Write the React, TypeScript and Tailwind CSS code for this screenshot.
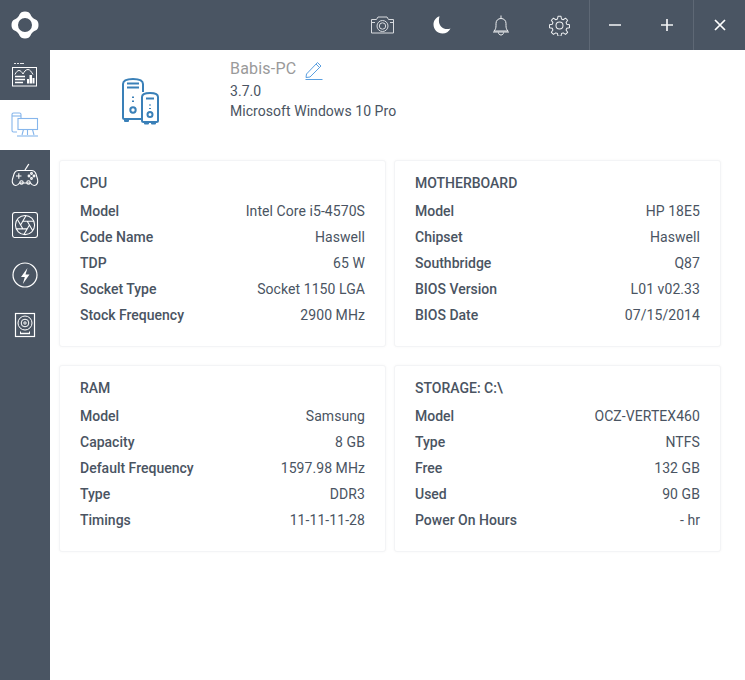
import React from "react";

const W = "#ffffff";

function Logo() {
  return (
    <svg width="30" height="30" viewBox="0 0 30 30" fill="none">
      <path
        fillRule="evenodd"
        fill={W}
        d="M15 1.500C18 1.500 19.500 2.500 20.500 4.500 21 6.500 23.500 9 25.500 9.500 27.500 10.500 28.500 12 28.500 15 28.500 18 27.500 19.500 25.500 20.500 23.500 21 21 23.500 20.500 25.500 19.500 27.500 18 28.500 15 28.500 12 28.500 10.500 27.500 9.500 25.500 9 23.500 6.500 21 4.500 20.500 2.500 19.500 1.500 18 1.500 15 1.500 12 2.500 10.500 4.500 9.500 6.500 9 9 6.500 9.500 4.500 10.500 2.500 12 1.500 15 1.500zM15 8a7 7 0 1 0 0 14 7 7 0 0 0 0-14z"
      />
    </svg>
  );
}

function NavDashboard() {
  return (
    <svg width="28" height="28" viewBox="0 0 28 28" fill="none" stroke={W} strokeWidth="1">
      <path d="M3 2.500h2M6 2.500h2M9 2.500h4" opacity=".85" />
      <rect x="1.500" y="6.500" width="24" height="18.500" />
      <path d="M4 13.500c1.200-2.500 2.500-4 4-4s2.800 1.500 4 3.500c1.200-2 2.500-4.500 5-4.500 2 0 3.500 2.500 5 5" />
      <path d="M4 15.500h10M4 18.500h10M4 21.500h8" strokeWidth="1.300" />
      <rect x="16" y="18" width="2" height="4.500" fill={W} stroke="none" />
      <rect x="18.500" y="14" width="2.500" height="8.500" fill={W} stroke="none" />
      <rect x="21.500" y="17" width="2" height="5.500" fill={W} stroke="none" />
    </svg>
  );
}

function NavPC() {
  return (
    <svg width="28" height="28" viewBox="0 0 28 28" fill="none" stroke="#86b6ec" strokeWidth="1.100">
      <path d="M6 21H2.500a1.500 1.500 0 0 1-1.500-1.500V3.500A1.500 1.500 0 0 1 2.500 2h6A1.500 1.500 0 0 1 10 3.500V7" />
      <path d="M1 5h9" />
      <rect x="7" y="7.500" width="19.500" height="11" />
      <path d="M12.500 18.500l-1.500 5.500M16.500 18.500v5.500M21.500 18.500l1.500 5.500" />
      <path d="M6 25h21" />
    </svg>
  );
}

function NavGame() {
  return (
    <svg width="28" height="28" viewBox="0 0 28 28" fill="none" stroke={W} strokeWidth="1.100">
      <path d="M14 9 17.800 3" strokeWidth="1.300" />
      <path d="M7.500 9.500h13c2.500 0 3.800 1.500 4.600 3.800l1.500 5.200c.7 3-.8 6-3.400 6-1.800 0-2.800-1.200-3.700-2.500H8.500C7.600 23.300 6.600 24.500 4.800 24.500c-2.600 0-4.100-3-3.400-6l1.500-5.200C3.700 11 5 9.500 7.500 9.500z" />
      <path d="M5 15h5.500M7.800 12.300v5.400" />
      <circle cx="20.500" cy="12.500" r=".9" />
      <circle cx="18" cy="15" r=".9" />
      <circle cx="23" cy="15" r=".9" />
      <circle cx="20.500" cy="17.500" r=".9" />
      <circle cx="10.500" cy="21.500" r="1.700" />
      <circle cx="17.500" cy="21.500" r="1.700" />
    </svg>
  );
}

function NavFan() {
  return (
    <svg width="26" height="26" viewBox="0 0 26 26" fill="none" stroke={W} strokeWidth="1">
      <rect x=".5" y=".5" width="25" height="25" rx="2.500" strokeWidth="1.100" />
      <g transform="translate(1.500 1.500) scale(.96)" strokeWidth="1.100">
        <circle cx="12" cy="12" r="10" />
        <path d="m14.310 8 5.740 9.940M9.690 8h11.480M7.380 12l5.740-9.940M9.690 16 3.950 6.060M14.310 16H2.830M16.620 12l-5.740 9.940" />
      </g>
    </svg>
  );
}

function NavBolt() {
  return (
    <svg width="26" height="26" viewBox="0 0 26 26" fill="none" stroke={W} strokeWidth="1.200">
      <circle cx="13" cy="13" r="12" />
      <path fill={W} stroke="none" d="M15.500 6 9 15h3.800l-2 7L17.500 12.500h-4z" />
    </svg>
  );
}

function NavDisk() {
  return (
    <svg width="22" height="28" viewBox="0 0 22 28" fill="none" stroke={W} strokeWidth="1">
      <rect x="1.500" y="2.500" width="19" height="23" strokeWidth="1.200" />
      <circle cx="11" cy="12" r="7" />
      <circle cx="11" cy="12" r="3.800" />
      <circle cx="11" cy="12" r="1.200" />
      <path d="M6 22.500h10" strokeWidth="1.500" />
      <path d="M6.500 20.500v2M15.500 20.500v2" />
    </svg>
  );
}

function Camera() {
  return (
    <svg width="23" height="18" viewBox="0 0 23 18" fill="none" stroke="#d8dbdf" strokeWidth="1">
      <path d="M.5 3.500h5l1.500-2.500h9l1.500 2.500h5v13.500H.5z" />
      <circle cx="11.500" cy="10" r="5.500" />
      <circle cx="11.500" cy="10" r="3.200" />
      <path d="M.5 6.500h3.500M19 6.500h3.500" />
    </svg>
  );
}

function Moon() {
  return (
    <svg width="20" height="20" viewBox="0 0 20 20" fill={W}>
      <path d="M7.500 1.200C3.800 2.500 1.500 5.700 1.500 9.500 1.500 14.500 5.500 18.500 10.500 18.500c3.500 0 6.600-2 8-5-1 .4-2.200.6-3.300.6-4.700 0-8.300-3.700-8.300-8.300 0-1.600.2-3.100.6-4.600z" />
    </svg>
  );
}

function Bell() {
  return (
    <svg width="18" height="21" viewBox="0 0 18 21" fill="none" stroke="#eef0f2" strokeWidth="1">
      <path d="M2 16c1.500-1.500 2-3 2-5.500V8.500C4 5.500 6 3.500 9 3.500s5 2 5 5v2c0 2.500.5 4 2 5.500z" />
      <path d="M1 17h16" />
      <path d="M9 .5v3M6.500 17.500c0 1.500 1 2.500 2.500 2.500s2.500-1 2.500-2.500" />
    </svg>
  );
}

function Gear() {
  return (
    <svg width="21" height="21" viewBox="0 0 24 24" fill="none" stroke="#eef0f2" strokeWidth="1.150" strokeLinejoin="round">
      <path d="M10.300 1.500h3.400l.6 3.100 1.900.8 2.700-1.800 2.400 2.400-1.800 2.700.8 1.900 3.100.6v3.400l-3.100.6-.8 1.900 1.800 2.700-2.400 2.400-2.700-1.800-1.900.8-.6 3.100h-3.400l-.6-3.100-1.900-.8-2.700 1.800-2.400-2.400 1.800-2.700-.8-1.900-3.100-.6v-3.400l3.100-.6.8-1.900-1.800-2.700 2.400-2.400 2.700 1.800 1.900-.8z" />
      <circle cx="12" cy="12" r="4" />
    </svg>
  );
}

function PcBig() {
  return (
    <svg width="44" height="50" viewBox="0 0 44 50" fill="none" stroke="#3a80b8" strokeWidth="2" strokeLinejoin="round">
      <path d="M21 43H4.500A1.500 1.500 0 0 1 3 41.500V8C3 4.500 7 3 13 3s10 1.500 10 5v8" />
      <path d="M7 7.500h12M7 11.500h12" />
      <path d="M13 20.500v1.500M13 24.500v1.500" />
      <circle cx="13" cy="34" r="2.700" />
      <path d="M5 43v2h3v-2" />
      <path d="M22 21c0-2.500 3.500-4 8-4s8 1.500 8 4v23.500a1.500 1.500 0 0 1-1.500 1.500h-13a1.500 1.500 0 0 1-1.500-1.500z" />
      <path d="M26 22.500h8" />
      <path d="M30 28.500v1M30 32v1" />
      <circle cx="30" cy="38.500" r="2.500" />
      <path d="M25 46v1.500h3V46M32 46v1.500h3V46" />
    </svg>
  );
}

function Pencil() {
  return (
    <svg width="18" height="18" viewBox="0 0 18 18" fill="none" stroke="#5a9fe0" strokeWidth="1">
      <path d="M1.500 13 12.500 1.500l3.500 3.500L5 16l-4 .5z" transform="translate(0 -1)" />
      <path d="m11 3 3.500 3.500" transform="translate(0 -1)" />
      <path d="M0.500 17.500h17" />
    </svg>
  );
}

const navItems: { el: React.ReactNode; active?: boolean }[] = [
  { el: <NavDashboard /> },
  { el: <NavPC />, active: true },
  { el: <NavGame /> },
  { el: <NavFan /> },
  { el: <NavBolt /> },
  { el: <NavDisk /> },
];

const cards: { title: string; rows: [string, string][] }[] = [
  {
    title: "CPU",
    rows: [
      ["Model", "Intel Core i5-4570S"],
      ["Code Name", "Haswell"],
      ["TDP", "65 W"],
      ["Socket Type", "Socket 1150 LGA"],
      ["Stock Frequency", "2900 MHz"],
    ],
  },
  {
    title: "MOTHERBOARD",
    rows: [
      ["Model", "HP 18E5"],
      ["Chipset", "Haswell"],
      ["Southbridge", "Q87"],
      ["BIOS Version", "L01 v02.33"],
      ["BIOS Date", "07/15/2014"],
    ],
  },
  {
    title: "RAM",
    rows: [
      ["Model", "Samsung"],
      ["Capacity", "8 GB"],
      ["Default Frequency", "1597.98 MHz"],
      ["Type", "DDR3"],
      ["Timings", "11-11-11-28"],
    ],
  },
  {
    title: "STORAGE: C:\\",
    rows: [
      ["Model", "OCZ-VERTEX460"],
      ["Type", "NTFS"],
      ["Free", "132 GB"],
      ["Used", "90 GB"],
      ["Power On Hours", "- hr"],
    ],
  },
];

function Card({ title, rows }: { title: string; rows: [string, string][] }) {
  return (
    <div className="h-[187px] rounded-[3px] border border-[#f3f4f6] bg-white pl-[20px] pr-[20px] pt-[10px] shadow-[0_0_3px_rgba(0,0,0,0.04)]">
      <div className="h-[27px] text-[14px] leading-[24px] font-medium text-[#4a5462]">{title}</div>
      {rows.map(([k, v]) => (
        <div key={k} className="flex h-[26px] items-center justify-between text-[14px] text-[#4a5462]">
          <span className="font-medium">{k}</span>
          <span className="tracking-[0.07px]">{v}</span>
        </div>
      ))}
    </div>
  );
}

export default function App() {
  return (
    <div className="flex h-[680px] w-[745px] flex-col overflow-hidden bg-white font-['Roboto',sans-serif]">
      <header className="flex h-[50px] items-center bg-[#4a5563]">
        <div className="flex w-[50px] items-center justify-center">
          <Logo />
        </div>
        <div className="ml-auto flex h-full items-center">
          <div className="flex w-[59px] justify-center"><Camera /></div>
          <div className="flex w-[59px] justify-center"><Moon /></div>
          <div className="flex w-[59px] justify-center"><Bell /></div>
          <div className="flex w-[59px] justify-center"><Gear /></div>
          <div className="flex h-full w-[52px] items-center justify-center border-l border-[#5e6875]">
            <div className="mr-[1px] h-[2px] w-[12px] bg-[#c9cdd2]" />
          </div>
          <div className="flex h-full w-[52px] items-center justify-center">
            <svg width="14" height="14" viewBox="0 0 14 14" stroke="#f2f3f5" strokeWidth="1.700"><path d="M7 1v12M1 7h12" /></svg>
          </div>
          <div className="flex h-full w-[52px] items-center justify-center border-l border-[#5e6875]">
            <svg width="12" height="12" viewBox="0 0 12 12" stroke="#ffffff" strokeWidth="1.700"><path d="m1 1 10 10M11 1 1 11" /></svg>
          </div>
        </div>
      </header>
      <div className="flex flex-1">
        <nav className="flex w-[50px] flex-col bg-[#4a5563]">
          {navItems.map((n, i) => (
            <div key={i} className={`flex h-[50px] items-center justify-center ${n.active ? "bg-white" : ""}`}>
              {n.el}
            </div>
          ))}
        </nav>
        <main className="flex-1 px-[9px]">
          <div className="flex h-[110px] pt-[26px]">
            <div className="w-[171px] pl-[61px]">
              <PcBig />
            </div>
            <div className="-mt-[18px] text-[14px] tracking-[0.05px] text-[#4a5462]">
              <div className="flex h-[22px] items-center">
                <span className="text-[16px] tracking-[0.2px] text-[#9a9a9a]">Babis-PC</span>
                <span className="ml-[9px] mt-[3px]"><Pencil /></span>
              </div>
              <div className="h-[20px] pt-[1px] leading-[20px]">3.7.0</div>
              <div className="mt-[1px] h-[20px] leading-[20px]">Microsoft Windows 10 Pro</div>
            </div>
          </div>
          <div className="grid grid-cols-[327px_327px] gap-x-[8px] gap-y-[18px]">
            {cards.map((c) => (
              <Card key={c.title} title={c.title} rows={c.rows} />
            ))}
          </div>
        </main>
      </div>
    </div>
  );
}
